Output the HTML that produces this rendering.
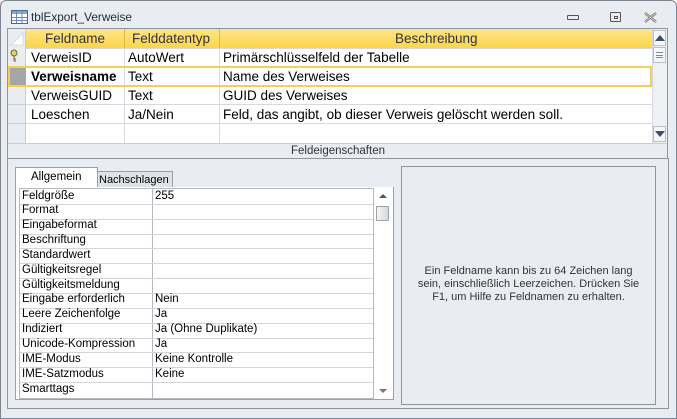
<!DOCTYPE html>
<html><head><meta charset="utf-8"><style>
*{box-sizing:border-box;margin:0;padding:0}
body{width:677px;height:419px;background:#fff;font-family:"Liberation Sans",sans-serif;position:relative;overflow:hidden}
.a{position:absolute}
.win{left:0;top:0;width:677px;height:419px;background:#e9ecf1;border:1px solid #7d8591;border-radius:6px 6px 0 0}
.t{font-size:13.5px;color:#000;white-space:nowrap}
.p{font-size:11.5px;white-space:nowrap;color:#000}
</style></head><body>
<div class="a win"></div>
<svg class="a" style="left:11px;top:10px" width="17" height="14"><rect x="0.5" y="0.5" width="16" height="13" fill="#fff" stroke="#4a6a9a"/><rect x="1" y="1" width="15" height="3" fill="#8aa6d0"/><path d="M1 7.5H16M1 10.5H16M5.5 1V13M11 1V13" stroke="#6a88b8"/></svg>
<div class="a" style="left:31px;top:10px;font-size:11.8px;color:#1e2a3a">tblExport_Verweise</div>
<div class="a" style="left:567px;top:15px;width:12px;height:5px;border:1px solid #555;border-radius:1px"></div>
<div class="a" style="left:610px;top:12px;width:11px;height:10px;border:1px solid #555;border-radius:1px"></div>
<div class="a" style="left:614px;top:16px;width:4px;height:3px;border:1px solid #555"></div>
<svg class="a" style="left:644px;top:12px" width="13" height="11"><path d="M1 1L12 10M12 1L1 10" stroke="#666" stroke-width="2.2"/><path d="M1 1L12 10M12 1L1 10" stroke="#fff" stroke-width="0.6"/></svg>
<div class="a" style="left:7px;top:28px;width:661px;height:131px;border:1px solid #8e959f;background:#fff"></div>
<div class="a" style="left:8px;top:29px;width:644px;height:19px;background:linear-gradient(#fde589,#fbd54b)"></div>
<div class="a" style="left:8px;top:29px;width:18px;height:114px;background:#e9ecf1;border-right:1px solid #c9ced6"></div>
<svg class="a" style="left:9px;top:32px" width="16" height="14"><path d="M14 1L2 13H14Z" fill="#fff" stroke="#d8dce2"/></svg>
<svg class="a" style="left:10px;top:49px" width="8" height="14"><circle cx="4" cy="4" r="3" fill="#dcd070" stroke="#6d6a20"/><path d="M4 7V12M4 10H6M4 12H6" stroke="#6d6a20"/></svg>
<div class="a" style="left:8px;top:67px;width:18px;height:19px;background:#a6a6a6"></div>
<div class="a" style="left:26px;top:48px;width:626px;height:1px;background:#d5dae2"></div>
<div class="a" style="left:26px;top:104px;width:626px;height:1px;background:#d5dae2"></div>
<div class="a" style="left:26px;top:123px;width:626px;height:1px;background:#d5dae2"></div>
<div class="a" style="left:8px;top:104px;width:18px;height:1px;background:#c9ced6"></div>
<div class="a" style="left:8px;top:123px;width:18px;height:1px;background:#c9ced6"></div>
<div class="a" style="left:124px;top:29px;width:1px;height:114px;background:#d5dae2"></div>
<div class="a" style="left:219px;top:29px;width:1px;height:114px;background:#d5dae2"></div>
<div class="a" style="left:124px;top:29px;width:1px;height:19px;background:#e0b840"></div>
<div class="a" style="left:219px;top:29px;width:1px;height:19px;background:#e0b840"></div>
<div class="a" style="left:8px;top:66px;width:644px;height:21px;border:2px solid #f2cf56"></div>
<div class="a t" style="left:45px;top:31px;color:#333">Feldname</div>
<div class="a t" style="left:132px;top:31px;color:#333">Felddatentyp</div>
<div class="a t" style="left:395px;top:31px;color:#333">Beschreibung</div>
<div class="a t" style="left:31px;top:50px">VerweisID</div><div class="a t" style="left:128px;top:50px">AutoWert</div><div class="a t" style="left:223px;top:50px">Primärschlüsselfeld der Tabelle</div>
<div class="a t" style="left:31px;top:69px;font-weight:bold">Verweisname</div><div class="a t" style="left:128px;top:69px">Text</div><div class="a t" style="left:223px;top:69px">Name des Verweises</div>
<div class="a t" style="left:31px;top:88px">VerweisGUID</div><div class="a t" style="left:128px;top:88px">Text</div><div class="a t" style="left:223px;top:88px">GUID des Verweises</div>
<div class="a t" style="left:31px;top:107px">Loeschen</div><div class="a t" style="left:128px;top:107px">Ja/Nein</div><div class="a t" style="left:223px;top:107px">Feld, das angibt, ob dieser Verweis gelöscht werden soll.</div>
<div class="a" style="left:652px;top:29px;width:15px;height:114px;background:#eef0f3;border-left:1px solid #d5dae2"></div>
<div class="a" style="left:653px;top:30px;width:13px;height:16px;border:1px solid #b8bfca;background:#f4f6f8"></div>
<svg class="a" style="left:655px;top:35px" width="10" height="6"><path d="M0 6L5 0L10 6Z" fill="#3c4c6a"/></svg>
<div class="a" style="left:653px;top:47px;width:13px;height:16px;border:1px solid #b8bfca;background:#f4f6f8"></div>
<div class="a" style="left:656px;top:52px;width:7px;height:6px;border-top:1px solid #888;border-bottom:1px solid #888"></div>
<div class="a" style="left:656px;top:55px;width:7px;height:1px;background:#888"></div>
<div class="a" style="left:653px;top:126px;width:13px;height:16px;border:1px solid #b8bfca;background:#f4f6f8"></div>
<svg class="a" style="left:655px;top:131px" width="10" height="6"><path d="M0 0L5 6L10 0Z" fill="#3c4c6a"/></svg>
<div class="a" style="left:8px;top:143px;width:659px;height:15px;background:#e9ecf1;border-top:1px solid #c9ced6"></div>
<div class="a" style="left:291px;top:145px;font-size:11.5px;color:#333">Feldeigenschaften</div>
<div class="a" style="left:7px;top:158px;width:662px;height:251px;border:1px solid #8e959f;border-top:none"></div>
<div class="a" style="left:15px;top:167px;width:83px;height:22px;background:#fff;border:1px solid #9aa0a8;border-bottom:none"></div>
<div class="a p" style="left:31px;top:171px">Allgemein</div>
<div class="a" style="left:97px;top:171px;width:76px;height:18px;background:#dfe2e6;border:1px solid #9aa0a8;border-bottom:none"></div>
<div class="a p" style="left:99px;top:174px;font-size:11px">Nachschlagen</div>
<div class="a" style="left:15px;top:187px;width:379px;height:213px;background:#fff;border:1px solid #9aa0a8;border-top:none"></div>
<div class="a" style="left:19px;top:188px;width:355px;height:211px;border:1px solid #b4b9c0;background:#fff"></div>
<div class="a" style="left:152px;top:188px;width:1px;height:211px;background:#b4b9c0"></div>
<div id="rows"></div>
<div class="a" style="left:376px;top:206px;width:13px;height:15px;border:1px solid #9aa0a8;background:linear-gradient(90deg,#f6f6f6,#d8d8d8);border-radius:1px"></div>
<svg class="a" style="left:379px;top:194px" width="8" height="4"><path d="M0 4L4 0L8 4Z" fill="#555"/></svg>
<svg class="a" style="left:379px;top:389px" width="8" height="4"><path d="M0 0L4 4L8 0Z" fill="#777"/></svg>
<div class="a" style="left:401px;top:166px;width:255px;height:239px;border:1px solid #8e959f"></div>
<div class="a" style="left:401px;top:265px;width:255px;text-align:center;font-size:11px;line-height:13px;color:#333">Ein Feldname kann bis zu 64 Zeichen lang<br>sein, einschließlich Leerzeichen. Drücken Sie<br>F1, um Hilfe zu Feldnamen zu erhalten.</div>
<script>
var r=[["Feldgröße","255"],["Format",""],["Eingabeformat",""],["Beschriftung",""],["Standardwert",""],["Gültigkeitsregel",""],["Gültigkeitsmeldung",""],["Eingabe erforderlich","Nein"],["Leere Zeichenfolge","Ja"],["Indiziert","Ja (Ohne Duplikate)"],["Unicode-Kompression","Ja"],["IME-Modus","Keine Kontrolle"],["IME-Satzmodus","Keine"],["Smarttags",""]];
var h="";for(var i=0;i<r.length;i++){var y=189+i*14.85;
h+='<div class="a p" style="left:22px;top:'+(y+0.5)+'px">'+r[i][0]+'</div><div class="a p" style="left:155px;top:'+(y+0.5)+'px">'+r[i][1]+'</div>';
if(i<13)h+='<div class="a" style="left:20px;top:'+Math.round(y+14.85)+'px;width:353px;height:1px;background:#d2d6dc"></div>';}
document.getElementById("rows").innerHTML=h;
</script>
</body></html>
